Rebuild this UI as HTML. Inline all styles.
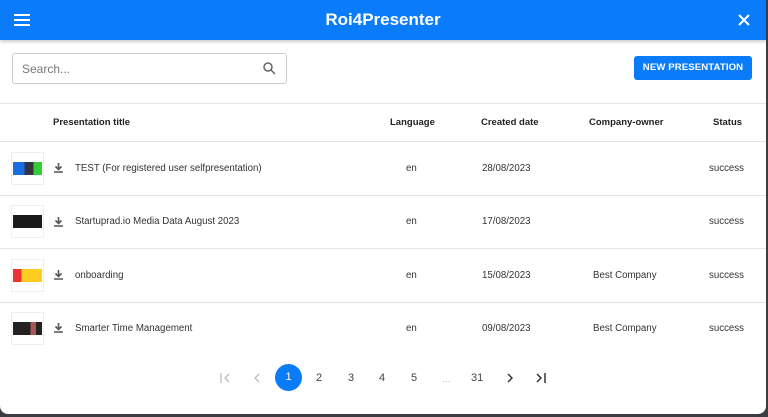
<!DOCTYPE html><html><head><style>
body{margin:0;width:768px;height:417px;background:#3a3d42;font-family:"Liberation Sans",sans-serif;overflow:hidden;position:relative}
.m{position:absolute;left:0;top:0;width:766px;height:414px;background:#fff;border-radius:0 0 8px 8px;overflow:hidden}
.h{height:40px;background:#0b7cf9;position:relative;box-shadow:0 2px 3px rgba(0,0,0,.2)}
.h .t{position:absolute;left:0;right:0;top:10px;text-align:center;color:#fff;font-weight:bold;font-size:17px}
.s{position:absolute;left:12px;top:53px;width:273px;height:29px;border:1px solid #ccc;border-radius:3px}
.s span{position:absolute;left:9px;top:8px;font-size:12px;color:#777}
.b{position:absolute;left:634px;top:56px;width:118px;height:24px;background:#0b7cf9;border-radius:3px;color:#fff;font-size:9.6px;font-weight:bold;text-align:center;line-height:24px;letter-spacing:.1px}
.l{position:absolute;left:0;width:766px;height:1px;background:#e3e3e3}
.tx{position:absolute;font-size:9.7px;color:#333;white-space:nowrap}
.hd{font-weight:bold;color:#222;font-size:9.5px}
.th{position:absolute;left:11px;width:31px;height:31px;border:1px solid #eee;background:#fff}
.th i{position:absolute;left:1px;right:1px;top:9px;height:13px;display:block}
.dl{position:absolute;left:54px;width:9px}
.pg{position:absolute;top:372px;font-size:11px;color:#444}
</style></head><body><div class="m">
<div class="h">
<svg style="position:absolute;left:14px;top:14px" width="16" height="12"><path d="M0 1h16M0 6h16M0 11h16" stroke="#fff" stroke-width="2"/></svg>
<div class="t">Roi4Presenter</div>
<svg style="position:absolute;left:738px;top:14px" width="12" height="12"><path d="M1 1l10 10M11 1L1 11" stroke="#fff" stroke-width="2"/></svg>
</div>
<div class="s"><span>Search...</span><svg style="position:absolute;left:250px;top:8px" width="13" height="13"><circle cx="5" cy="5" r="4" fill="none" stroke="#666" stroke-width="1.5"/><path d="M8 8l4 4" stroke="#666" stroke-width="1.5"/></svg></div>
<div class="b">NEW PRESENTATION</div>
<div class="l" style="top:103px"></div>
<div class="tx hd" style="left:53px;top:117px">Presentation title</div>
<div class="tx hd" style="left:390px;top:117px">Language</div>
<div class="tx hd" style="left:481px;top:117px">Created date</div>
<div class="tx hd" style="left:589px;top:117px">Company-owner</div>
<div class="tx hd" style="left:713px;top:117px">Status</div>
<div class="l" style="top:141px"></div>
<div class="l" style="top:195px"></div>
<div class="l" style="top:248px"></div>
<div class="l" style="top:302px"></div>

<div class="th" style="top:152px"><i style="background:linear-gradient(90deg,#1a6fe0 40%,#334 40% 70%,#3c3 70%)"></i></div>
<div class="th" style="top:205px"><i style="background:#1a1a1a"></i></div>
<div class="th" style="top:259px"><i style="background:linear-gradient(90deg,#e33 30%,#fc2 30%)"></i></div>
<div class="th" style="top:312px"><i style="background:linear-gradient(90deg,#222 60%,#a55 60% 80%,#222 80%)"></i></div>

<svg class="dl" style="top:163px" width="9" height="10"><path d="M4.5 0v6M1.5 3.5l3 3 3-3M0 9h9" stroke="#555" stroke-width="1.6" fill="none"/></svg>
<svg class="dl" style="top:217px" width="9" height="10"><path d="M4.5 0v6M1.5 3.5l3 3 3-3M0 9h9" stroke="#555" stroke-width="1.6" fill="none"/></svg>
<svg class="dl" style="top:270px" width="9" height="10"><path d="M4.5 0v6M1.5 3.5l3 3 3-3M0 9h9" stroke="#555" stroke-width="1.6" fill="none"/></svg>
<svg class="dl" style="top:323px" width="9" height="10"><path d="M4.5 0v6M1.5 3.5l3 3 3-3M0 9h9" stroke="#555" stroke-width="1.6" fill="none"/></svg>

<div class="tx" style="left:75px;top:163px">TEST (For registered user selfpresentation)</div>
<div class="tx" style="left:75px;top:216px">Startuprad.io Media Data August 2023</div>
<div class="tx" style="left:75px;top:270px">onboarding</div>
<div class="tx" style="left:75px;top:323px">Smarter Time Management</div>
<div class="tx" style="left:406px;top:163px">en</div><div class="tx" style="left:482px;top:163px">28/08/2023</div><div class="tx" style="left:709px;top:163px">success</div>
<div class="tx" style="left:406px;top:216px">en</div><div class="tx" style="left:482px;top:216px">17/08/2023</div><div class="tx" style="left:709px;top:216px">success</div>
<div class="tx" style="left:406px;top:270px">en</div><div class="tx" style="left:482px;top:270px">15/08/2023</div><div class="tx" style="left:593px;top:270px">Best Company</div><div class="tx" style="left:709px;top:270px">success</div>
<div class="tx" style="left:406px;top:323px">en</div><div class="tx" style="left:482px;top:323px">09/08/2023</div><div class="tx" style="left:593px;top:323px">Best Company</div><div class="tx" style="left:709px;top:323px">success</div>

<svg style="position:absolute;left:220px;top:373px" width="11" height="10"><path d="M1 0v10M9 1L5 5l4 4" stroke="#bbb" stroke-width="1.3" fill="none"/></svg>
<svg style="position:absolute;left:254px;top:373px" width="6" height="10"><path d="M5 1L1 5l4 4" stroke="#bbb" stroke-width="1.3" fill="none"/></svg>
<div style="position:absolute;left:275px;top:364px;width:27px;height:27px;border-radius:50%;background:#0b7cf9;color:#fff;font-size:11px;text-align:center;line-height:27px">1</div>
<div class="pg" style="left:316px">2</div><div class="pg" style="left:348px">3</div><div class="pg" style="left:379px">4</div><div class="pg" style="left:411px">5</div>
<div class="pg" style="left:442px;color:#aaa;font-size:9px;top:374px">…</div>
<div class="pg" style="left:471px">31</div>
<svg style="position:absolute;left:507px;top:373px" width="6" height="10"><path d="M1 1l4 4-4 4" stroke="#333" stroke-width="1.5" fill="none"/></svg>
<svg style="position:absolute;left:536px;top:373px" width="11" height="10"><path d="M1 1l4 4-4 4M9 0v10" stroke="#333" stroke-width="1.5" fill="none"/></svg>
</div></body></html>
